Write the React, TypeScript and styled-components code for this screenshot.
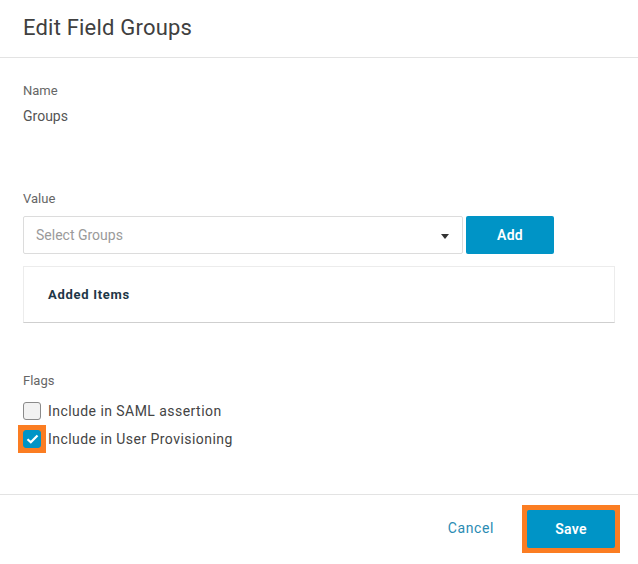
import styled, { createGlobalStyle } from "styled-components";

/* --- CSS --- */
const GlobalStyle = createGlobalStyle`
  html, body {
    margin: 0;
    padding: 0;
    background: #ffffff;
    font-family: Roboto, "Liberation Sans", Arial, sans-serif;
  }
  * {
    box-sizing: border-box;
  }
`;

const Modal = styled.div`
  width: 638px;
  height: 564px;
  display: flex;
  flex-direction: column;
  background: #ffffff;
`;

const Header = styled.div`
  height: 58px;
  display: flex;
  align-items: center;
  padding: 0 23px 2px;
  border-bottom: 1px solid #e3e3e3;
`;

const Title = styled.h2`
  margin: 0;
  font-size: 22px;
  font-weight: 400;
  letter-spacing: 0.2px;
  color: #404040;
`;

const Body = styled.div`
  flex: 1;
  display: flex;
  flex-direction: column;
  padding: 25px 23px 0;
  border-bottom: 1px solid #e3e3e3;
`;

const Label = styled.div<{ $top?: number }>`
  margin-top: ${(p) => p.$top ?? 0}px;
  font-size: 13px;
  line-height: 16px;
  color: #666666;
`;

const StaticValue = styled.div`
  margin-top: 7px;
  font-size: 14px;
  line-height: 20px;
  color: #555555;
`;

const SelectRow = styled.div`
  margin-top: 9px;
  display: flex;
  gap: 3px;
`;

const Select = styled.div`
  width: 440px;
  height: 38px;
  display: flex;
  align-items: center;
  justify-content: space-between;
  padding: 0 13px 0 12px;
  border: 1px solid #dcdcdc;
  border-radius: 2px;
  font-size: 14px;
  color: #9a9a9a;
`;

const Caret = styled.span`
  width: 0;
  height: 0;
  border-left: 4.5px solid transparent;
  border-right: 4.5px solid transparent;
  border-top: 5px solid #333333;
  margin-top: 2px;
`;

const Highlight = styled.span`
  display: inline-flex;
  border: 5px solid #fb7d22;
  background: #fb7d22;
`;

const PrimaryButton = styled.button`
  width: 88px;
  height: 38px;
  border: none;
  border-radius: 2px;
  background: #0094c6;
  color: #ffffff;
  font-family: inherit;
  font-size: 14px;
  font-weight: 600;
  letter-spacing: 0.3px;
  cursor: pointer;
`;

const AddedBox = styled.div`
  margin-top: 12px;
  height: 57px;
  display: flex;
  align-items: center;
  padding: 0 24px 1px;
  border: 1px solid #ececec;
  border-bottom: 1px solid #cfcfcf;
`;

const AddedTitle = styled.div`
  font-size: 13px;
  font-weight: 700;
  letter-spacing: 0.7px;
  color: #1e3747;
`;

const CheckRow = styled.label<{ $top: number }>`
  margin-top: ${(p) => p.$top}px;
  display: flex;
  align-items: center;
  gap: 7px;
  height: 18px;
  font-size: 14px;
  color: #444444;
  letter-spacing: 0.45px;
`;

const BoxSlot = styled.span`
  width: 18px;
  height: 18px;
  display: flex;
  align-items: center;
  justify-content: center;
`;

const Box = styled.span<{ $checked?: boolean }>`
  width: 18px;
  height: 18px;
  flex: none;
  display: flex;
  align-items: center;
  justify-content: center;
  border-radius: 3px;
  border: 1px solid ${(p) => (p.$checked ? "#0094c6" : "#8a8a8a")};
  background: ${(p) => (p.$checked ? "#0094c6" : "#f2f2f2")};
`;

const Footer = styled.div`
  height: 69px;
  display: flex;
  justify-content: flex-end;
  align-items: flex-start;
  gap: 28px;
  padding: 10px 18px 0;
`;

const LinkButton = styled.button`
  height: 36px;
  margin-top: 5px;
  border: none;
  background: none;
  padding: 0;
  font-family: inherit;
  font-size: 14px;
  letter-spacing: 0.6px;
  color: #2a8bb3;
  cursor: pointer;
`;

function App() {
  return (
    <>
      <GlobalStyle />
      <Modal>
        <Header>
          <Title>Edit Field Groups</Title>
        </Header>
        <Body>
          <Label>Name</Label>
          <StaticValue>Groups</StaticValue>

          <Label $top={65}>Value</Label>
          <SelectRow>
            <Select>
              <span>Select Groups</span>
              <Caret />
            </Select>
            <PrimaryButton>Add</PrimaryButton>
          </SelectRow>
          <AddedBox>
            <AddedTitle>Added Items</AddedTitle>
          </AddedBox>

          <Label $top={50}>Flags</Label>
          <CheckRow $top={13}>
            <Box />
            Include in SAML assertion
          </CheckRow>
          <CheckRow $top={10}>
            <BoxSlot>
              <Highlight>
                <Box $checked>
                  <svg width="13" height="10" viewBox="0 0 13 10">
                    <path d="M1.5 5.2 L4.8 8.3 L11.5 1.5" fill="none" stroke="#ffffff" strokeWidth="2.2" />
                  </svg>
                </Box>
              </Highlight>
            </BoxSlot>
            Include in User Provisioning
          </CheckRow>
        </Body>
        <Footer>
          <LinkButton>Cancel</LinkButton>
          <Highlight>
            <PrimaryButton>Save</PrimaryButton>
          </Highlight>
        </Footer>
      </Modal>
    </>
  );
}

export default App;
